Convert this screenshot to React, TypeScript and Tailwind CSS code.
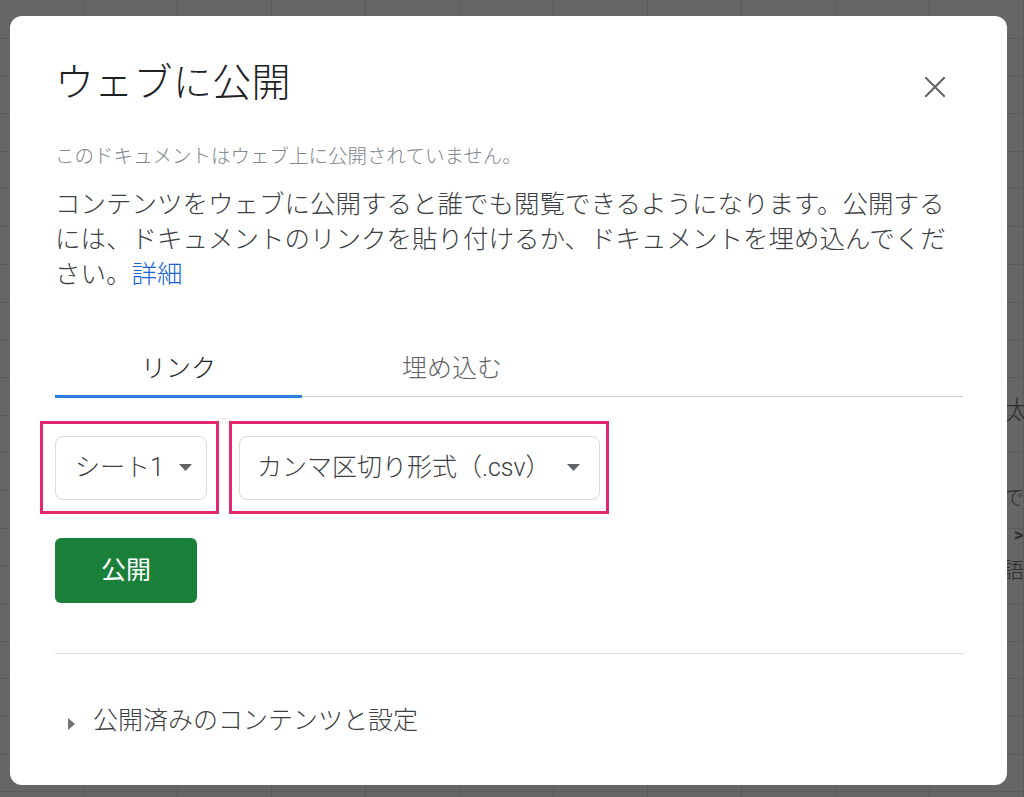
import React from "react";

const rows = Array.from({ length: 22 });
const cols = Array.from({ length: 12 });

export default function App() {
  return (
    <div className="relative w-[1024px] h-[797px] overflow-hidden bg-[#666666] font-['Roboto','Noto_Sans_CJK_JP',sans-serif] font-light">
      {/* spreadsheet behind the overlay */}
      <div className="absolute inset-0 flex flex-col pt-[1px]">
        {rows.map((_, i) => (
          <div key={i} className="h-[37.7px] shrink-0 border-b border-[#5b5b5b]" />
        ))}
      </div>
      <div className="absolute inset-0 flex pl-[83px]">
        {cols.map((_, i) => (
          <div key={i} className="w-[94px] shrink-0 border-l border-[#5b5b5b]" />
        ))}
      </div>
      <div className="absolute left-[1004px] top-[398px] text-[26px] leading-none text-[#2e2e2e]">太</div>
      <div className="absolute left-[1004px] top-[488px] text-[20px] leading-none text-[#2e2e2e]">で</div>
      <div className="absolute left-[1014px] top-[526px] text-[18px] font-bold leading-none text-[#2e2e2e]">&gt;</div>
      <div className="absolute left-[1002px] top-[560px] text-[22px] leading-none text-[#2e2e2e]">語</div>

      {/* dialog */}
      <div className="absolute left-[10px] top-[16px] w-[997px] h-[769px] rounded-[12px] bg-white pl-[45px] pr-[44px] pt-[42px]">
        <div className="flex items-center justify-between h-[50px]">
          <h1 className="text-[39px] leading-[50px] text-[#202124] tracking-[0.3px]">ウェブに公開</h1>
          <button className="mr-[16px] mt-[8px] w-[24px] h-[24px] flex items-center justify-center">
            <svg width="22" height="22" viewBox="0 0 22 22">
              <path d="M2 2 L20 20 M20 2 L2 20" stroke="#5f6368" strokeWidth="2" strokeLinecap="square" />
            </svg>
          </button>
        </div>

        <p className="mt-[37px] text-[19.5px] leading-[24px] text-[#80868b]">
          このドキュメントはウェブ上に公開されていません。
        </p>

        <p className="mt-[18px] text-[25.5px] leading-[35px] text-[#3c4043]">
          コンテンツをウェブに公開すると誰でも閲覧できるようになります。公開するには、ドキュメントのリンクを貼り付けるか、ドキュメントを埋め込んでください。<span className="text-[#1a62d4]">詳細</span>
        </p>

        {/* tabs */}
        <div className="mt-[49px] flex h-[56px] border-b border-[#cccccc]">
          <div className="relative w-[247px] flex items-center justify-center text-[25px] text-[#202124]">
            リンク
            <div className="absolute left-0 right-0 bottom-[-2px] h-[3px] bg-[#2a7de1]" />
          </div>
          <div className="w-[300px] flex items-center justify-center text-[25px] text-[#5f6368]">
            埋め込む
          </div>
        </div>

        {/* selects with annotation boxes */}
        <div className="mt-[24px] ml-[-15px] flex gap-[10px]">
          <div className="w-[179px] h-[93px] border-[3px] border-[#e3286f] flex items-center pl-[12px]">
            <div className="w-[152px] h-[64px] rounded-[8px] border border-[#dadce0] flex items-center pl-[19px] gap-[15px]">
              <span className="text-[25px] text-[#3c4043]">シート1</span>
              <svg width="13" height="7" viewBox="0 0 13 7">
                <path d="M0 0 L13 0 L6.5 7 Z" fill="#5f6368" />
              </svg>
            </div>
          </div>
          <div className="w-[380px] h-[93px] border-[3px] border-[#e3286f] flex items-center pl-[7px]">
            <div className="w-[361px] h-[64px] rounded-[8px] border border-[#dadce0] flex items-center justify-between pl-[17px] pr-[19px]">
              <span className="text-[25px] text-[#3c4043]">カンマ区切り形式（.csv）</span>
              <svg width="13" height="7" viewBox="0 0 13 7">
                <path d="M0 0 L13 0 L6.5 7 Z" fill="#5f6368" />
              </svg>
            </div>
          </div>
        </div>

        <button className="mt-[24px] w-[142px] h-[65px] rounded-[6px] bg-[#1a8039] text-white text-[25px] font-normal flex items-center justify-center">
          公開
        </button>

        <div className="mt-[50px] h-px bg-[#dadce0]" />

        <div className="mt-[49px] flex items-center h-[36px]">
          <svg width="7" height="12" viewBox="0 0 7 12" className="ml-[13px] mt-[5px]">
            <path d="M0 0 L7 6 L0 12 Z" fill="#757575" />
          </svg>
          <span className="ml-[18px] text-[25px] leading-[36px] text-[#3c4043]">公開済みのコンテンツと設定</span>
        </div>
      </div>
    </div>
  );
}
